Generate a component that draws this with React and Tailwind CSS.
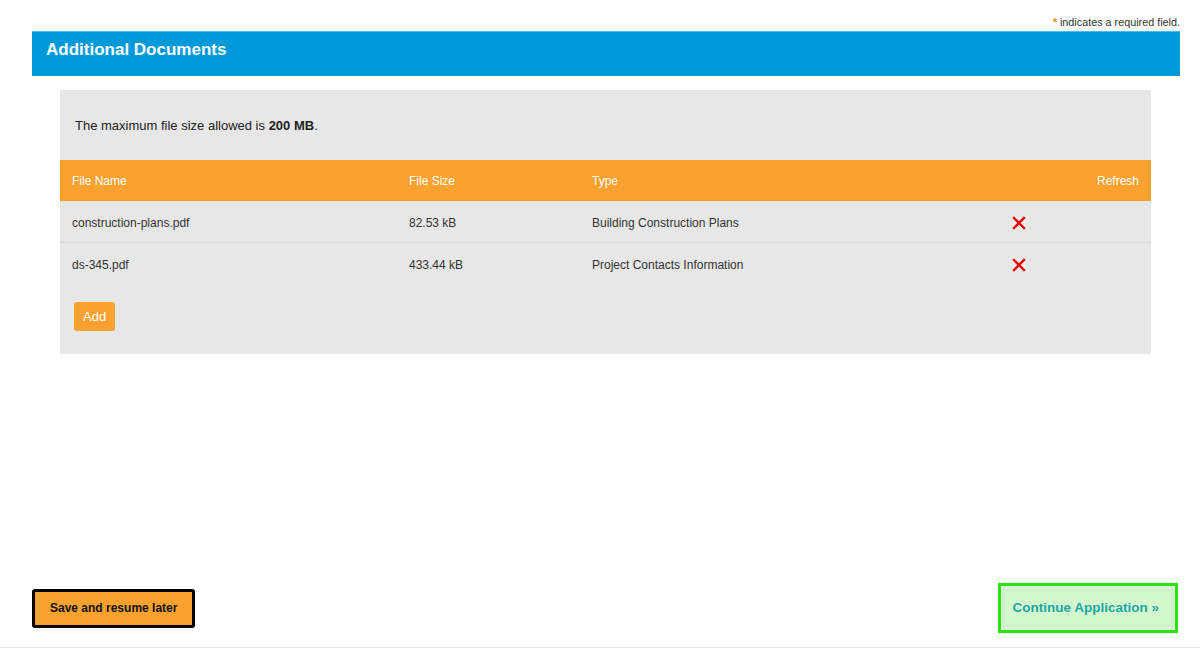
import React from 'react';

const files = [
  { name: 'construction-plans.pdf', size: '82.53 kB', type: 'Building Construction Plans' },
  { name: 'ds-345.pdf', size: '433.44 kB', type: 'Project Contacts Information' },
];

function RemoveIcon() {
  return (
    <span className="flex h-[14px] w-[14px] items-center justify-center bg-[#ececec]">
      <svg width="14" height="14" viewBox="0 0 14 14">
        <path d="M2 2 L12 12 M12 2 L2 12" stroke="#e60000" strokeWidth="2.4" strokeLinecap="square" />
      </svg>
    </span>
  );
}

export default function App() {
  return (
    <div className="flex h-[648px] w-full flex-col bg-white font-['Liberation_Sans',Arial,sans-serif] text-[#222]">
      {/* required note */}
      <div className="flex items-baseline justify-end pr-5 pt-[16px] text-[10.8px] leading-[12px] text-[#333]">
        <span className="font-bold text-[#e28a1a]">*</span>
        <span>&nbsp;indicates a required field.</span>
      </div>

      {/* section header */}
      <div className="ml-8 mr-5 mt-[3px] h-[45px] border-t border-[#4fb9e8] bg-[#0099d9] pl-[14px] pt-[8px]">
        <h1 className="text-[17px] font-bold leading-[20px] text-white">Additional Documents</h1>
      </div>

      {/* documents panel */}
      <div className="ml-[60px] mr-[49px] mt-[14px] bg-[#e7e7e7]">
        <p className="flex h-[70px] items-center pl-[15px] pt-[2px] text-[13px]">
          The maximum file size allowed is&nbsp;<b className="font-bold">200 MB</b>.
        </p>

        <div className="grid h-[41px] grid-cols-[337px_183px_420px_1fr] items-center bg-[#fba130] pt-[1px] text-[12px] text-white">
          <span className="pl-3">File Name</span>
          <span className="pl-3">File Size</span>
          <span className="pl-3">Type</span>
          <span className="pr-3 text-right">Refresh</span>
        </div>

        {files.map((f, i) => (
          <div
            key={f.name}
            className={
              'grid h-[42px] grid-cols-[337px_183px_420px_1fr] items-center pt-[2px] text-[12px] text-[#333] ' +
              (i === 0 ? 'border-b border-[#dadada]' : '')
            }
          >
            <span className="pl-3">{f.name}</span>
            <span className="pl-3">{f.size}</span>
            <span className="pl-3">{f.type}</span>
            <span className="pl-3">
              <RemoveIcon />
            </span>
          </div>
        ))}

        <div className="pb-[23px] pl-[14px] pt-[17px]">
          <button className="h-[29px] rounded-[3px] bg-[#fba130] px-[9px] pt-[1px] text-[13px] text-white">Add</button>
        </div>
      </div>

      {/* footer actions */}
      <div className="mt-auto flex items-center justify-between border-b border-[#e6e6e6] pb-[14px] pl-8 pr-[22px]">
        <button className="h-[39px] rounded-[3px] border-[3px] border-black bg-[#fba130] px-[15px] text-[12px] font-bold text-[#111]">
          Save and resume later
        </button>
        <button className="h-[50px] border-[3px] border-[#2de00f] bg-[#d3f8cd] pl-[12px] pr-[16px] text-[13.5px] font-bold text-[#1ea5a8]">
          Continue Application »
        </button>
      </div>
    </div>
  );
}
